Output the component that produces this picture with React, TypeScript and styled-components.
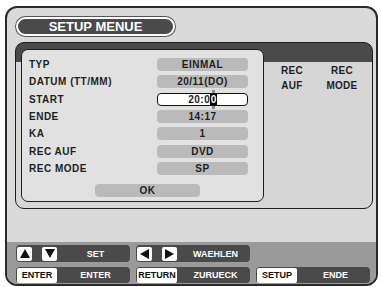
import React from 'react';
import styled, { createGlobalStyle } from 'styled-components';

const GlobalStyle = createGlobalStyle`
  html, body {
    margin: 0;
    padding: 0;
    background: #ffffff;
  }
  body {
    font-family: "Liberation Sans", Arial, sans-serif;
    font-weight: bold;
  }
  * {
    box-sizing: border-box;
  }
`;

const Frame = styled.div`
  width: 373px;
  height: 280px;
  margin: 6px 0 0 5px;
  border: 2px solid #2a2a2a;
  border-radius: 12px;
  background: #dadada;
  overflow: hidden;
  display: flex;
  flex-direction: column;
`;

const TitlePill = styled.div`
  width: 159px;
  height: 19px;
  margin: 9px 0 0 9px;
  background: #4a4a4a;
  border: 2px solid #ffffff;
  box-shadow: 0 0 0 1px #555;
  border-radius: 10px;
  color: #ffffff;
  font-size: 13px;
  line-height: 15px;
  text-align: center;
`;

const MainPanel = styled.div`
  width: 358px;
  height: 167px;
  margin: 6px 0 0 8px;
  border: 1px solid #1e1e1e;
  border-radius: 9px;
  background: linear-gradient(to bottom, #4a4a4a 0, #4a4a4a 19px, #d6d6d6 19px);
  padding: 6px 0 0 5px;
  display: flex;
`;

const InnerPanel = styled.div`
  width: 243px;
  height: 153px;
  border: 1px solid #1e1e1e;
  border-radius: 7px;
  background: #e1e1e1;
  padding: 8px 15px 0 7px;
  display: flex;
  flex-direction: column;
`;

const Rows = styled.div`
  display: grid;
  grid-template-columns: 1fr 91px;
  grid-auto-rows: 13px;
  row-gap: 4.33px;
  align-items: center;
`;

const Label = styled.div`
  font-size: 10px;
  letter-spacing: 0.5px;
  color: #1e1e1e;
  line-height: 13px;
`;

const ValuePill = styled.div<{ $active?: boolean }>`
  height: 13px;
  border-radius: 4px;
  background: ${p => (p.$active ? '#ffffff' : '#bababa')};
  border: ${p => (p.$active ? '1px solid #111' : 'none')};
  font-size: 10px;
  letter-spacing: 0.5px;
  color: #1e1e1e;
  line-height: ${p => (p.$active ? '11px' : '13px')};
  text-align: center;
`;

const Cursor = styled.span`
  position: relative;
  display: inline-block;
  background: #000;
  color: #fff;
  letter-spacing: 0;
  padding: 0 0.5px;
  &::before,
  &::after {
    content: '';
    position: absolute;
    left: 50%;
    margin-left: -1.5px;
    width: 3px;
    height: 3px;
    background: #8a8a8a;
  }
  &::before {
    top: -4px;
  }
  &::after {
    bottom: -4px;
  }
`;

const OkButton = styled.div`
  width: 105px;
  height: 13px;
  margin: 9.5px 0 0 66px;
  border-radius: 4px;
  background: #bababa;
  font-size: 10px;
  letter-spacing: 0.5px;
  color: #1e1e1e;
  line-height: 13px;
  text-align: center;
`;

const RightCol = styled.div`
  margin-top: 13.5px;
  padding-left: 3px;
  display: grid;
  grid-template-columns: 50px 50px;
  grid-auto-rows: 15px;
  align-content: start;
`;

const RightText = styled.div`
  font-size: 10px;
  letter-spacing: 0.3px;
  color: #1e1e1e;
  line-height: 15px;
  text-align: center;
`;

const ControlArea = styled.div`
  flex: 1;
  margin-top: 33px;
  background: #9a9a9a;
  padding: 3px 0 0 9px;
  display: flex;
  flex-direction: column;
  gap: 5px;
`;

const ControlRow = styled.div<{ $h: number }>`
  display: flex;
  gap: 6px;
  height: ${p => p.$h}px;
`;

const CtrlPill = styled.div`
  width: 114px;
  height: 100%;
  background: #4a4a4a;
  border-radius: 4px;
  display: flex;
  align-items: center;
  padding: 0 1px;
`;

const KeyGroup = styled.div`
  width: 40px;
  display: flex;
  justify-content: space-between;
`;

const ArrowBox = styled.div`
  width: 15px;
  height: 14px;
  background: #ffffff;
  border-radius: 2px;
  display: flex;
  align-items: center;
  justify-content: center;
`;

const KeyBox = styled.div`
  width: 40px;
  height: 15px;
  background: #ffffff;
  border-radius: 2px;
  color: #111;
  font-size: 9px;
  line-height: 15px;
  text-align: center;
`;

const CtrlLabel = styled.div`
  flex: 1;
  color: #ffffff;
  font-size: 9px;
  text-align: center;
  padding-left: 5px;
`;

type Dir = 'up' | 'down' | 'left' | 'right';

const Arrow = ({ dir }: { dir: Dir }) => {
  const pts: Record<Dir, string> = {
    up: '0,9 5,0 10,9',
    down: '0,0 10,0 5,9',
    left: '9,0 9,10 0,5',
    right: '0,0 9,5 0,10',
  };
  const vertical = dir === 'up' || dir === 'down';
  return (
    <svg width={vertical ? 10 : 9} height={vertical ? 9 : 10} viewBox={vertical ? '0 0 10 9' : '0 0 9 10'}>
      <polygon points={pts[dir]} fill="#111" />
    </svg>
  );
};

const rows: { label: string; value: React.ReactNode; active?: boolean }[] = [
  { label: 'TYP', value: 'EINMAL' },
  { label: 'DATUM (TT/MM)', value: '20/11(DO)' },
  {
    label: 'START',
    value: (
      <>
        20:0<Cursor>0</Cursor>
      </>
    ),
    active: true,
  },
  { label: 'ENDE', value: '14:17' },
  { label: 'KA', value: '1' },
  { label: 'REC AUF', value: 'DVD' },
  { label: 'REC MODE', value: 'SP' },
];

export default function App() {
  return (
    <>
      <GlobalStyle />
      <Frame>
        <TitlePill>SETUP MENUE</TitlePill>
        <MainPanel>
          <InnerPanel>
            <Rows>
              {rows.map(r => (
                <React.Fragment key={r.label}>
                  <Label>{r.label}</Label>
                  <ValuePill $active={r.active}>{r.value}</ValuePill>
                </React.Fragment>
              ))}
            </Rows>
            <OkButton>OK</OkButton>
          </InnerPanel>
          <RightCol>
            <RightText>REC</RightText>
            <RightText>REC</RightText>
            <RightText>AUF</RightText>
            <RightText>MODE</RightText>
          </RightCol>
        </MainPanel>
        <ControlArea>
          <ControlRow $h={17}>
            <CtrlPill>
              <KeyGroup>
                <ArrowBox><Arrow dir="up" /></ArrowBox>
                <ArrowBox><Arrow dir="down" /></ArrowBox>
              </KeyGroup>
              <CtrlLabel>SET</CtrlLabel>
            </CtrlPill>
            <CtrlPill>
              <KeyGroup>
                <ArrowBox><Arrow dir="left" /></ArrowBox>
                <ArrowBox><Arrow dir="right" /></ArrowBox>
              </KeyGroup>
              <CtrlLabel>WAEHLEN</CtrlLabel>
            </CtrlPill>
          </ControlRow>
          <ControlRow $h={16}>
            <CtrlPill>
              <KeyBox>ENTER</KeyBox>
              <CtrlLabel>ENTER</CtrlLabel>
            </CtrlPill>
            <CtrlPill>
              <KeyBox>RETURN</KeyBox>
              <CtrlLabel>ZURUECK</CtrlLabel>
            </CtrlPill>
            <CtrlPill>
              <KeyBox>SETUP</KeyBox>
              <CtrlLabel>ENDE</CtrlLabel>
            </CtrlPill>
          </ControlRow>
        </ControlArea>
      </Frame>
    </>
  );
}
